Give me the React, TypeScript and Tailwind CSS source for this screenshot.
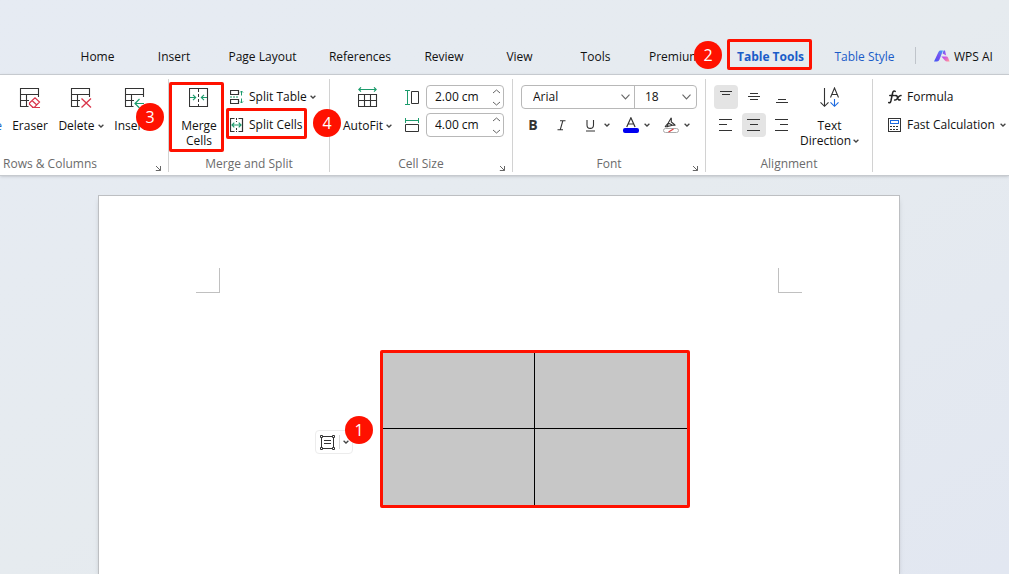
import type { ReactNode } from "react";

const tabs: { name: string; cell: string }[] = [
  { name: "Home", cell: "w-[75px]" },
  { name: "Insert", cell: "w-[78px]" },
  { name: "Page Layout", cell: "w-[99px]" },
  { name: "References", cell: "w-24" },
  { name: "Review", cell: "w-18" },
  { name: "View", cell: "w-[79px]" },
  { name: "Tools", cell: "w-[73px]" },
];

function Caret() {
  return (
    <svg width="6" height="4" viewBox="0 0 6 4" fill="none" stroke="#444" strokeWidth="1.3" className="shrink-0">
      <path d="M0.6 0.7 L3 3 L5.4 0.7" />
    </svg>
  );
}

function Chevron() {
  return (
    <svg width="9" height="6" viewBox="0 0 9 6" fill="none" stroke="#666" strokeWidth="1.1">
      <path d="M0.5 0.7 L4.5 4.9 L8.5 0.7" />
    </svg>
  );
}

function Badge({ n, className }: { n: number; className: string }) {
  return (
    <span
      className={`absolute z-10 flex size-7 items-center justify-center rounded-full bg-[#ff1100] text-base text-white ${className}`}
    >
      {n}
    </span>
  );
}

function Group({
  label,
  launcher,
  className,
  labelClass = "justify-center",
  children,
}: {
  label?: string;
  launcher?: boolean;
  className: string;
  labelClass?: string;
  children: ReactNode;
}) {
  return (
    <section aria-label={label} className={`relative flex h-[93px] shrink-0 flex-col justify-between ${className}`}>
      <div className="flex items-start">{children}</div>
      {label && <div className={`flex h-4 items-center text-[#6b6b6b] ${labelClass}`}>{label}</div>}
      {launcher && (
        <button aria-label={`${label} settings`} className="absolute right-1.5 bottom-0">
          <svg width="7" height="7" viewBox="0 0 7 7" fill="none" stroke="#666">
            <path d="M1 1 L5.5 5.5 M5.5 1 V5.5 H0.8" />
          </svg>
        </button>
      )}
    </section>
  );
}

function TableGrid({ cut }: { cut: ReactNode }) {
  return (
    <svg width="22" height="22" viewBox="0 0 22 22" fill="none" stroke="#333">
      <path d="M9.5 18.5 H1.5 V0.5 H19.5 V9 M1.5 6.5 H19.5 M1.5 12.5 H10 M7.5 6.5 V18.5" strokeWidth="1.1" />
      {cut}
    </svg>
  );
}

function SizeField({ label, value, children }: { label: string; value: string; children: ReactNode }) {
  return (
    <div className="flex h-6 items-center">
      {children}
      <div className="ml-1.5 flex h-6 w-[78px] items-center rounded-sm border border-[#b8b8b8] bg-white pr-0.5 pl-2">
        <input aria-label={label} defaultValue={value} className="w-full min-w-0 bg-transparent outline-none" />
        <div className="flex flex-col gap-[6px]">
          <button aria-label={`Increase ${label}`} className="flex h-1.5 items-center">
            <svg width="9" height="5" viewBox="0 0 9 5" fill="none" stroke="#666">
              <path d="M1 4 L4.5 1 L8 4" />
            </svg>
          </button>
          <button aria-label={`Decrease ${label}`} className="flex h-1.5 items-center">
            <svg width="9" height="5" viewBox="0 0 9 5" fill="none" stroke="#666">
              <path d="M1 1 L4.5 4 L8 1" />
            </svg>
          </button>
        </div>
      </div>
    </div>
  );
}

function AlignButton({ label, path, active }: { label: string; path: string; active?: boolean }) {
  return (
    <button aria-label={label} aria-pressed={!!active} className={`size-6 rounded-sm ${active ? "bg-[#e4e4e4]" : ""}`}>
      <svg width="24" height="24" viewBox="0 0 24 24" stroke="#333" fill="none">
        <path d={path} />
      </svg>
    </button>
  );
}

function Ribbon() {
  return (
    <div className="flex border-y border-[#c6cacf] bg-white pt-1 pb-[3px] shadow-sm">
      <Group label="Rows & Columns" launcher labelClass="pl-[3px]" className="w-[169px] border-r border-[#d2d2d2]">
        <div className="flex w-full pt-[9px]">
          <button className="flex w-0.5 shrink-0 justify-end overflow-hidden pt-[30px] leading-4 text-[#1668c7]">Table</button>
          <button className="flex w-14 flex-col items-center gap-2 leading-4">
            <TableGrid
              cut={
                <path
                  d="M10.5 15 L16 9.8 L20.5 14 L15.3 19.3 H13.8 L10.5 16.2 Z M13 12.5 L17.8 17 M13 19.5 H21"
                  stroke="#d9344a"
                  strokeWidth="1.2"
                />
              }
            />
            Eraser
          </button>
          <button className="flex w-[46px] flex-col items-center gap-2 leading-4">
            <TableGrid cut={<path d="M11.5 10.5 L21 19.5 M21 10.5 L11.5 19.5" stroke="#d9344a" strokeWidth="1.3" />} />
            <span className="flex items-center gap-[3px]">
              Delete <Caret />
            </span>
          </button>
          <button className="ml-2 flex w-[46px] flex-col items-center gap-2 leading-4">
            <TableGrid
              cut={<path d="M20 15.5 H11.5 M15.5 11 L11 15.5 L15.5 20" stroke="#1c9b6c" strokeWidth="1.2" />}
            />
            <span className="flex items-center gap-[3px]">
              Insert <Caret />
            </span>
          </button>
        </div>
        <Badge n={3} className="top-6 left-34" />
      </Group>

      <Group label="Merge and Split" className="w-[161px] border-r border-[#d2d2d2]">
        <div className="flex items-start pt-[3px]">
          <button className="flex h-[70px] w-[55px] flex-col items-center rounded-xs border-3 border-[#ff1100] pt-[3px] pl-[5px] leading-[15px]">
            <svg width="20" height="20" viewBox="0 0 20 20" fill="none" stroke="#333" className="mb-2.5 shrink-0">
              <path d="M0.5 0.5 H18.5 V18.5 H0.5 Z" strokeWidth="1.1" />
              <path d="M9.5 1 V18" strokeDasharray="3 2" />
              <path d="M1 9.5 H6.5 M4 6.8 L6.7 9.5 L4 12.2 M18 9.5 H12.5 M15 6.8 L12.3 9.5 L15 12.2" stroke="#1c9b6c" strokeWidth="1.1" />
            </svg>
            Merge
            <br />
            Cells
          </button>
          <div className="ml-0.5 flex flex-col pt-1">
            <button className="flex h-[22px] items-center pl-1">
              <svg width="14" height="14" viewBox="0 0 14 14" fill="none" stroke="#333" className="mr-[5px]">
                <path d="M0.5 0.5 H8.5 V4.5 H0.5 Z M0.5 9.5 H8.5 V13.5 H0.5 Z" strokeWidth="1.2" />
                <path d="M0 7 H9" stroke="#1c9b6c" strokeDasharray="2 1" />
                <path d="M11.5 5.5 V1 M10 2.5 L11.5 1 L13 2.5 M11.5 8.5 V13 M10 11.5 L11.5 13 L13 11.5" stroke="#1c9b6c" />
              </svg>
              Split Table
              <span className="ml-[3px]">
                <Caret />
              </span>
            </button>
            <button className="flex h-[31px] w-[81px] items-center rounded-xs border-3 border-[#ff1100] pt-0.5 pl-px whitespace-nowrap">
              <svg width="14" height="14" viewBox="0 0 14 14" fill="none" stroke="#333" className="mr-[5px] shrink-0">
                <path d="M4.5 0.5 H0.5 V13.5 H4.5 M8.5 0.5 H12.5 V13.5 H8.5" strokeWidth="1.2" />
                <path d="M6.5 0 V4 M6.5 10 V14" strokeDasharray="2 1" />
                <path d="M2 7 H11 M4.3 4.7 L2 7 L4.3 9.3 M8.7 4.7 L11 7 L8.7 9.3" stroke="#1c9b6c" strokeWidth="1.2" />
              </svg>
              Split Cells
            </button>
          </div>
        </div>
        <Badge n={4} className="top-[30px] -right-3" />
      </Group>

      <Group label="Cell Size" launcher className="w-[183px] border-r border-[#d2d2d2]">
        <button className="flex w-[75px] flex-col items-center gap-[9px] pt-2 leading-4">
          <svg width="20" height="22" viewBox="0 0 20 22" fill="none" stroke="#333">
            <path d="M0.5 7.5 H18.5 V19.5 H0.5 Z M0.5 13.5 H18.5 M6.5 7.5 V19.5 M12.5 7.5 V19.5" strokeWidth="1.1" />
            <path d="M1 2.5 H18 M3 0.3 L0.8 2.5 L3 4.7 M16 0.3 L18.2 2.5 L16 4.7" stroke="#1c9b6c" strokeWidth="1.1" />
          </svg>
          <span className="flex items-center gap-[3px]">
            AutoFit <Caret />
          </span>
        </button>
        <div className="flex flex-col gap-1 pt-1.5">
          <SizeField label="Row height" value="2.00 cm">
            <svg width="15" height="15" viewBox="0 0 15 15" fill="none" stroke="#333">
              <path d="M6.5 1.5 H13.5 V13.5 H6.5 Z" />
              <path d="M2.5 0.5 V14.5 M0 0.5 H5 M0 14.5 H5" stroke="#1c9b6c" />
            </svg>
          </SizeField>
          <SizeField label="Column width" value="4.00 cm">
            <svg width="15" height="15" viewBox="0 0 15 15" fill="none" stroke="#333">
              <path d="M0.5 6.5 H13.5 V13.5 H0.5 Z" />
              <path d="M0.5 2.5 H13.5 M0.5 0 V5 M13.5 0 V5" stroke="#1c9b6c" />
            </svg>
          </SizeField>
        </div>
      </Group>

      <Group label="Font" launcher className="w-[193px] border-r border-[#d2d2d2]">
        <div className="flex w-full flex-col gap-1 px-2 pt-1.5">
          <div className="flex h-6 w-44 rounded-sm border border-[#b8b8b8]">
            <div className="relative flex flex-1 items-center border-r border-[#b8b8b8]">
              <select aria-label="Font name" className="h-full w-full appearance-none bg-transparent pl-[11px] outline-none">
                <option>Arial</option>
              </select>
              <span className="pointer-events-none absolute right-1">
                <Chevron />
              </span>
            </div>
            <div className="relative flex w-[61px] items-center">
              <select aria-label="Font size" className="h-full w-full appearance-none bg-transparent pl-2.5 outline-none">
                <option>18</option>
              </select>
              <span className="pointer-events-none absolute right-[5px]">
                <Chevron />
              </span>
            </div>
          </div>
          <div className="flex h-6 items-center">
            <button className="w-6 text-sm font-bold text-[#333]">B</button>
            <button aria-label="Italic" className="ml-1 flex w-6 justify-center">
              <svg width="9" height="11" viewBox="0 0 9 11" fill="none" stroke="#333" strokeWidth="1.1">
                <path d="M3 0.8 H8.5 M0.5 9.8 H6 M5.8 0.8 L3.2 9.8" />
              </svg>
            </button>
            <button aria-label="Underline" className="ml-2 flex items-center gap-2 pl-1">
              <svg width="11" height="13" viewBox="0 0 11 13" fill="none" stroke="#333" strokeWidth="1.1">
                <path d="M2 1 V6 Q2 9.4 5.2 9.4 Q8.5 9.4 8.5 6 V1 M1 12 H10" />
              </svg>
              <Caret />
            </button>
            <button aria-label="Font color" className="ml-[13px] flex items-center gap-[5px]">
              <svg width="16" height="16" viewBox="0 0 16 16" fill="none">
                <path d="M3.7 10 L7.9 0.8 L12.1 10 M5.2 7 H10.6" stroke="#333" strokeWidth="1.2" />
                <rect x="0" y="11" width="16" height="5" rx="2" fill="#0000f0" />
              </svg>
              <Caret />
            </button>
            <button aria-label="Highlight color" className="ml-[13px] flex items-center gap-[5px]">
              <svg width="16" height="16" viewBox="0 0 16 16" fill="none">
                <path
                  d="M2 9.8 L5.2 6 L8.3 0.8 M5.2 6 L9.5 8.3 L12.5 8.3 M8.3 0.8 V5 L12 8 M5.2 6 L4.5 9.6 L9.5 8.3 M2 9.8 H4.8"
                  stroke="#333"
                  strokeWidth="1.1"
                />
                <rect x="0.5" y="11.5" width="15" height="4" rx="2" fill="#fff" stroke="#aaa" />
                <path d="M5.5 15 L10.5 12" stroke="#e04040" strokeWidth="1.2" />
              </svg>
              <Caret />
            </button>
          </div>
        </div>
      </Group>

      <Group label="Alignment" className="w-[167px] border-r border-[#d2d2d2]">
        <div className="grid grid-cols-3 gap-1 pt-1.5 pl-2">
          <AlignButton label="Align top" active path="M6 6.5 H18 M8 9.5 H16" />
          <AlignButton label="Align middle" path="M8 8.5 H16 M6 11.5 H18 M8 14.5 H16" />
          <AlignButton label="Align bottom" path="M8 14.5 H16 M6 17.5 H18" />
          <AlignButton label="Align left" path="M5 6.5 H18 M5 11.5 H13 M5 17.5 H18" />
          <AlignButton label="Align center" active path="M5 6.5 H18 M8 11.5 H16 M5 17.5 H18" />
          <AlignButton label="Align right" path="M5 6.5 H18 M10 11.5 H18 M5 17.5 H18" />
        </div>
        <button className="ml-1.5 flex flex-col items-center pt-2 leading-[15px]">
          <svg width="20" height="22" viewBox="0 0 20 22" fill="none" stroke="#333" strokeWidth="1.1" className="mb-[9px]">
            <path d="M4.5 1 V19.5 M0.5 15.3 L4.5 19.3 L8.5 15.3 M10.5 10.5 L14.5 1 L18.5 10.5 M12 7.5 H17" />
            <path d="M14.5 12 V19.5 M10.5 15.3 L14.5 19.3 L18.5 15.3" stroke="#1e6be0" />
          </svg>
          <span>Text</span>
          <span className="flex items-center gap-0.5">
            Direction <Caret />
          </span>
        </button>
      </Group>

      <Group className="flex-1">
        <div className="flex flex-col items-start gap-1 pt-1.5 pl-[15px]">
          <button className="flex h-6 items-center gap-[5px]">
            <svg width="14" height="14" viewBox="0 0 14 14" fill="none" stroke="#222" strokeWidth="1.5" strokeLinecap="round">
              <path d="M7.2 1.4 Q5.4 0.2 4.6 3 L2.9 11 Q2.3 13.4 0.7 12.5 M1.8 5.4 H6.2" />
              <path d="M7.2 5.6 Q8.8 4.8 9.4 7.4 Q10.2 10.8 12.3 9.8 M13 5.5 Q11.6 5.2 9.8 7.8 Q8 10.6 6.6 10" />
            </svg>
            Formula
          </button>
          <button className="flex h-6 items-center gap-[5px] whitespace-nowrap">
            <svg width="14" height="14" viewBox="0 0 14 14" fill="none" stroke="#333">
              <rect x="0.5" y="0.5" width="12" height="13" />
              <rect x="2.5" y="2.5" width="8" height="3" stroke="#1e6be0" />
              <path d="M2 8.5 H11 M2 11.5 H11" strokeDasharray="2 1" />
            </svg>
            Fast Calculation
            <Caret />
          </button>
        </div>
      </Group>
    </div>
  );
}

export default function App() {
  return (
    <div className="flex min-h-screen flex-col overflow-x-hidden bg-linear-to-br from-[#e6ebf3] via-[#e6ebef] to-[#e2e7f1] font-['Open_Sans','Noto_Sans',sans-serif] text-xs text-[#111]">
      <nav className="flex h-[74px] shrink-0 items-end pb-1 pl-15 whitespace-nowrap">
        {tabs.map((t) => (
          <a key={t.name} href="#" className={`flex h-[31px] shrink-0 items-center justify-center pt-1 ${t.cell}`}>
            {t.name}
          </a>
        ))}
        <div className="relative shrink-0">
          <a href="#" className="flex h-[31px] w-[95px] items-center pt-1 pl-[17px]">
            Premium
          </a>
          <Badge n={2} className="top-[2px] right-[5px]" />
        </div>
        <a
          href="#"
          className="flex h-[31px] w-[85px] shrink-0 items-center justify-center rounded-xs border-3 border-[#ff1100] pt-1 pl-0.5 font-bold text-[#1a5cc8]"
        >
          Table Tools
        </a>
        <a href="#" className="flex h-[31px] w-[103px] shrink-0 items-center justify-center pt-1 pl-0.5 text-[#1a5cc8]">
          Table Style
        </a>
        <div className="mb-1.5 h-[17px] w-px shrink-0 bg-[#bfc4ca]" />
        <a href="#" className="ml-[18px] flex h-[31px] shrink-0 items-center gap-1 pt-1">
          <svg width="16" height="14" viewBox="0 0 16 14">
            <defs>
              <linearGradient id="ai-left" x1="0" y1="1" x2="1" y2="0">
                <stop offset="0" stopColor="#3a5cf5" />
                <stop offset="0.5" stopColor="#7a4df0" />
                <stop offset="1" stopColor="#36a8f8" />
              </linearGradient>
              <linearGradient id="ai-right" x1="0" y1="0" x2="0.8" y2="1">
                <stop offset="0" stopColor="#2a6cf8" />
                <stop offset="0.5" stopColor="#c04fee" />
                <stop offset="1" stopColor="#ff8d9d" />
              </linearGradient>
            </defs>
            <path d="M0 11.5 L4.5 2 Q5.2 0.6 6.5 0.6 H9 L5.5 9.5 Q4.7 11.5 3 11.5 Z" fill="url(#ai-left)" />
            <path d="M8.6 3.4 L9.6 0.6 H11 L12.2 5.6 Z M7.4 6.4 H12.6 Q13.6 6.4 14 7.6 L15.6 11.5 H13 Q11.6 11.5 10.9 10.4 Z" fill="url(#ai-right)" />
          </svg>
          WPS AI
        </a>
      </nav>

      <Ribbon />

      <main className="flex flex-1 pt-[19px] pr-[109px] pl-[98px]">
        <article className="flex flex-1 flex-col border border-b-0 border-[#bdbfc2] bg-white pt-[72px] shadow-md">
          <div className="flex justify-between px-[97px]">
            <div className="h-[25px] w-6 border-r border-b border-[#c0c0c0]" />
            <div className="h-[25px] w-6 border-b border-l border-[#c0c0c0]" />
          </div>
          <div className="relative mt-[57px] ml-[281px] w-[310px] rounded-xs border-3 border-[#ff1100] bg-[#c7c7c7]">
            <table className="w-full table-fixed border-separate border-spacing-0" aria-label="Selected cells">
              <tbody>
                <tr className="h-19">
                  <td className="border-r border-b border-black" />
                  <td className="border-b border-black" />
                </tr>
                <tr className="h-19">
                  <td className="border-r border-black" />
                  <td />
                </tr>
              </tbody>
            </table>
            <button
              aria-label="Table options"
              className="absolute top-[77px] -left-[68px] flex h-6 w-[38px] items-center rounded-sm border border-[#ececec] bg-white pl-1"
            >
              <svg width="15" height="15" viewBox="0 0 15 15" fill="none" stroke="#333">
                <path d="M1.5 3 V12 M13.5 3 V12 M3 1.5 H12 M3 13.5 H12 M4 5.5 H11 M4 8.5 H11" />
                <path d="M0.5 0.5 h2 v2 h-2 z M12.5 0.5 h2 v2 h-2 z M0.5 12.5 h2 v2 h-2 z M12.5 12.5 h2 v2 h-2 z" fill="#fff" />
              </svg>
              <span className="mr-[3px] ml-1 h-3.5 w-px bg-[#d8d8d8]" />
              <Caret />
            </button>
            <Badge n={1} className="top-[63px] -left-[38px]" />
          </div>
        </article>
      </main>
    </div>
  );
}
